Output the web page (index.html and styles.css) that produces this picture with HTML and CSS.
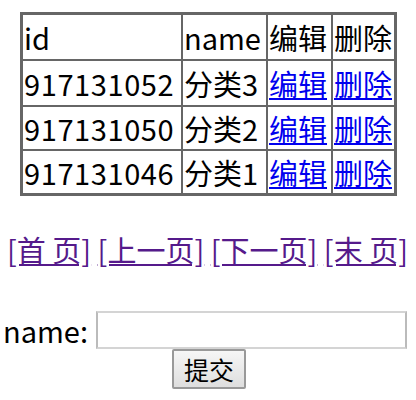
FILE: index.html
```html
<!DOCTYPE html>
<html>
<head>
<meta charset="utf-8">
<link rel="stylesheet" href="styles.css">
</head>
<body>
<table class="list">
  <tr class="head"><th class="c-id">id</th><th class="c-name">name</th><th class="c-edit">编辑</th><th class="c-del">删除</th></tr>
  <tr class="r1"><td>917131052</td><td>分类3</td><td><a href="#">编辑</a></td><td><a href="#">删除</a></td></tr>
  <tr class="r2"><td>917131050</td><td>分类2</td><td><a href="#">编辑</a></td><td><a href="#">删除</a></td></tr>
  <tr class="r3"><td>917131046</td><td>分类1</td><td><a href="#">编辑</a></td><td><a href="#">删除</a></td></tr>
</table>
<div class="pager">
  <a class="v" href="#">[首 页]</a> <a class="v" href="#">[上一页]</a> <a class="v" href="#">[下一页]</a> <a class="v" href="#">[末 页]</a>
</div>
<form class="form">
  <div class="row"><label class="lbl">name:</label><input class="inp" type="text"></div>
  <div class="btnrow"><button class="btn" type="button">提交</button></div>
</form>
</body>
</html>
```
FILE: styles.css
```css
html, body { margin: 0; padding: 0; background: #fff; }
body {
  font-family: "Noto Sans CJK SC", "Noto Sans", sans-serif;
  font-size: 29px;
  color: #000;
  width: 416px;
  overflow: hidden;
}
.list {
  margin: 12px 0 0 20px;
  border-collapse: collapse;
  border: 3px solid #666;
  table-layout: fixed;
}
.list th, .list td {
  border: 2px solid #666;
  padding: 0 1px;
  font-weight: normal;
  text-align: left;
  white-space: nowrap;
  overflow: hidden;
  line-height: 40px;
}
.list td:first-child { letter-spacing: 0.6px; }
.c-id { width: 156px; }
.c-name { width: 81px; }
.c-edit { width: 61px; }
.c-del { width: 59px; }
.head { height: 46px; }
.r1 { height: 46px; }
.r2 { height: 44px; }
.r3 { height: 45px; }
.list a { color: #0000ee; }
.pager {
  margin-top: 33px;
  padding-left: 7px;
  line-height: 40px;
  white-space: nowrap;
}
.pager a.v { color: #551a8b; }
.form { margin-top: 42px; }
.row { display: flex; align-items: center; padding-left: 3px; }
.lbl { line-height: 38px; margin-right: 8px; }
.inp {
  width: 311px;
  height: 38px;
  box-sizing: border-box;
  border: 2px solid #d4d4d4;
  border-left-color: #bbb;
  border-right-color: #bbb;
  padding: 0;
  background: #fff;
}
.btnrow { display: flex; padding-left: 172px; }
.btn {
  font-family: inherit;
  font-size: 25px;
  width: 74px;
  height: 40px;
  box-sizing: border-box;
  border: 2px solid #999;
  border-radius: 2px;
  background: linear-gradient(#f6f6f6, #dedede);
  color: #000;
  padding: 0;
  line-height: 34px;
}
```
